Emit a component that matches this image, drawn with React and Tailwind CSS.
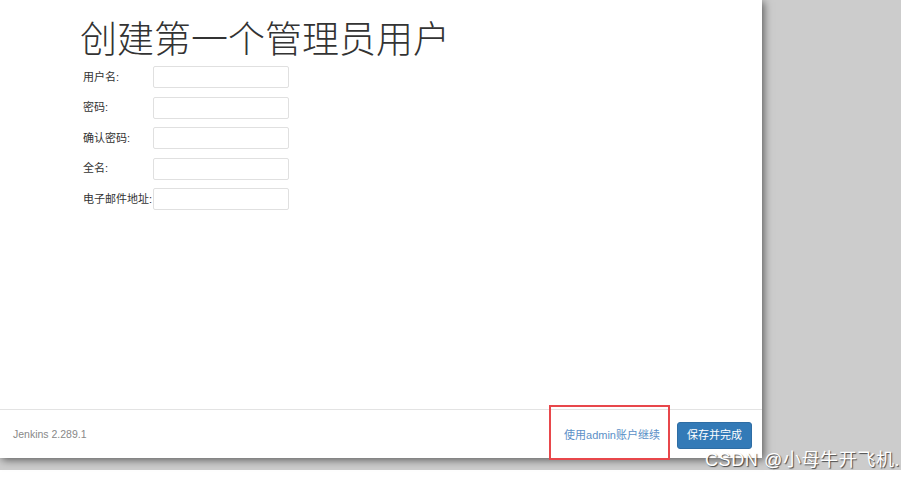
export default function App() {
  const fields = ["用户名:", "密码:", "确认密码:", "全名:", "电子邮件地址:"];

  return (
    <div
      className="relative w-[911px] h-[479px] bg-white overflow-hidden"
      style={{ fontFamily: '"Liberation Sans", "Noto Sans CJK SC", sans-serif' }}
    >
      <div className="w-[901px] h-[470px] bg-[#cccccc]">
        <div className="relative w-[762px] h-[458px] bg-white shadow-[2px_2px_8px_rgba(0,0,0,0.55)] flex flex-col">
          <div className="flex-1 pl-[80px]">
            <h1 className="mt-[22px] h-[44px] text-[37px] leading-none text-[#333] font-light whitespace-nowrap">
              创建第一个管理员用户
            </h1>
            <div className="flex flex-col gap-[8.5px] pl-[3px]">
              {fields.map((label) => (
                <div key={label} className="flex items-center h-[22px]">
                  <label className="w-[70px] text-[11px] text-[#333] whitespace-nowrap">
                    {label}
                  </label>
                  <input
                    type={label === "密码:" || label === "确认密码:" ? "password" : "text"}
                    className="w-[136px] h-[22px] border border-[#e0e0e0] rounded-[2px] bg-white"
                  />
                </div>
              ))}
            </div>
          </div>

          <div className="h-[49px] border-t border-[#e3e3e3] flex items-center pt-[2px] pl-[13px] pr-[10px]">
            <span className="text-[10.5px] text-[#888]">Jenkins 2.289.1</span>
            <div className="ml-auto flex items-center gap-[17px]">
              <a className="text-[11px] text-[#5b8fc7] cursor-pointer">使用admin账户继续</a>
              <button className="h-[27px] px-[9px] bg-[#337ab7] text-white text-[11px] rounded-[3px] border border-[#2e6da4]">
                保存并完成
              </button>
            </div>
          </div>

          <div className="absolute left-[549px] top-[405px] w-[121px] h-[55px] border-2 border-[#e8474b] pointer-events-none" />
        </div>
      </div>

      <div className="absolute left-[705px] top-[451px] text-[18px] leading-none tracking-[0.6px] text-white whitespace-nowrap [text-shadow:1px_1px_1px_rgba(0,0,0,0.65)]">
        CSDN @小母牛开飞机.
      </div>
    </div>
  );
}
